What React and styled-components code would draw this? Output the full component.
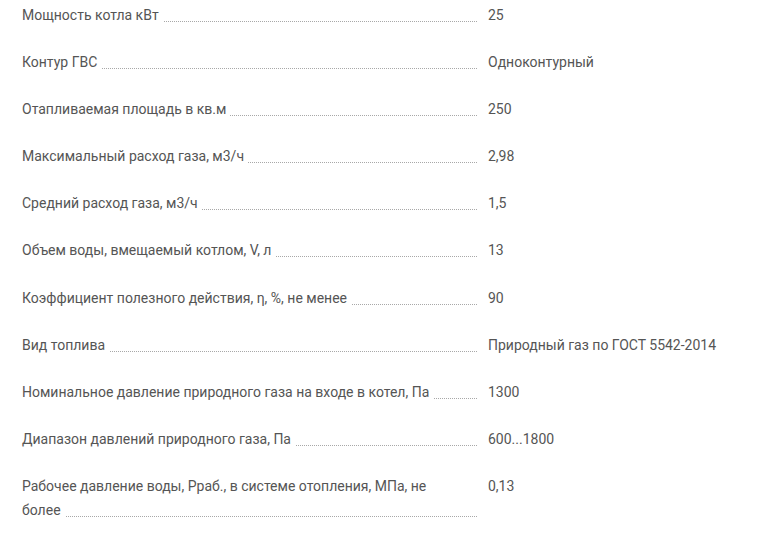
import React from "react";
import styled, { createGlobalStyle } from "styled-components";

const Global = createGlobalStyle`
  html, body { margin: 0; padding: 0; background: #fff; }
  body { font-family: Roboto, "Noto Sans", Arial, sans-serif; }
`;

const List = styled.dl`
  margin: 0;
  padding: 3px 0 0 22px;
  display: grid;
  grid-template-columns: 456px 1fr;
  column-gap: 10px;
  row-gap: 23.1px;
  font-size: 14px;
  line-height: 24px;
  color: #555;
`;

const Label = styled.dt`
  margin: 0;
  padding-right: 24px;
  background-image: linear-gradient(to right, #a8a8a8 50%, transparent 50%);
  background-size: 2px 1px;
  background-repeat: repeat-x;
  background-position: 0 calc(100% - 5px);
`;

const LabelText = styled.span`
  background: #fff;
  padding-right: 4px;
`;

const Value = styled.dd`
  margin: 0;
`;

const rows = [
  ["Мощность котла кВт", "25"],
  ["Контур ГВС", "Одноконтурный"],
  ["Отапливаемая площадь в кв.м", "250"],
  ["Максимальный расход газа, м3/ч", "2,98"],
  ["Средний расход газа, м3/ч", "1,5"],
  ["Объем воды, вмещаемый котлом, V, л", "13"],
  ["Коэффициент полезного действия, η, %, не менее", "90"],
  ["Вид топлива", "Природный газ по ГОСТ 5542-2014"],
  ["Номинальное давление природного газа на входе в котел, Па", "1300"],
  ["Диапазон давлений природного газа, Па", "600...1800"],
  ["Рабочее давление воды, Рраб., в системе отопления, МПа, не более", "0,13"],
];

export default function App() {
  return (
    <>
      <Global />
      <List>
        {rows.map(([l, v]) => (
          <React.Fragment key={l}>
            <Label>
              <LabelText>{l}</LabelText>
            </Label>
            <Value>{v}</Value>
          </React.Fragment>
        ))}
      </List>
    </>
  );
}
